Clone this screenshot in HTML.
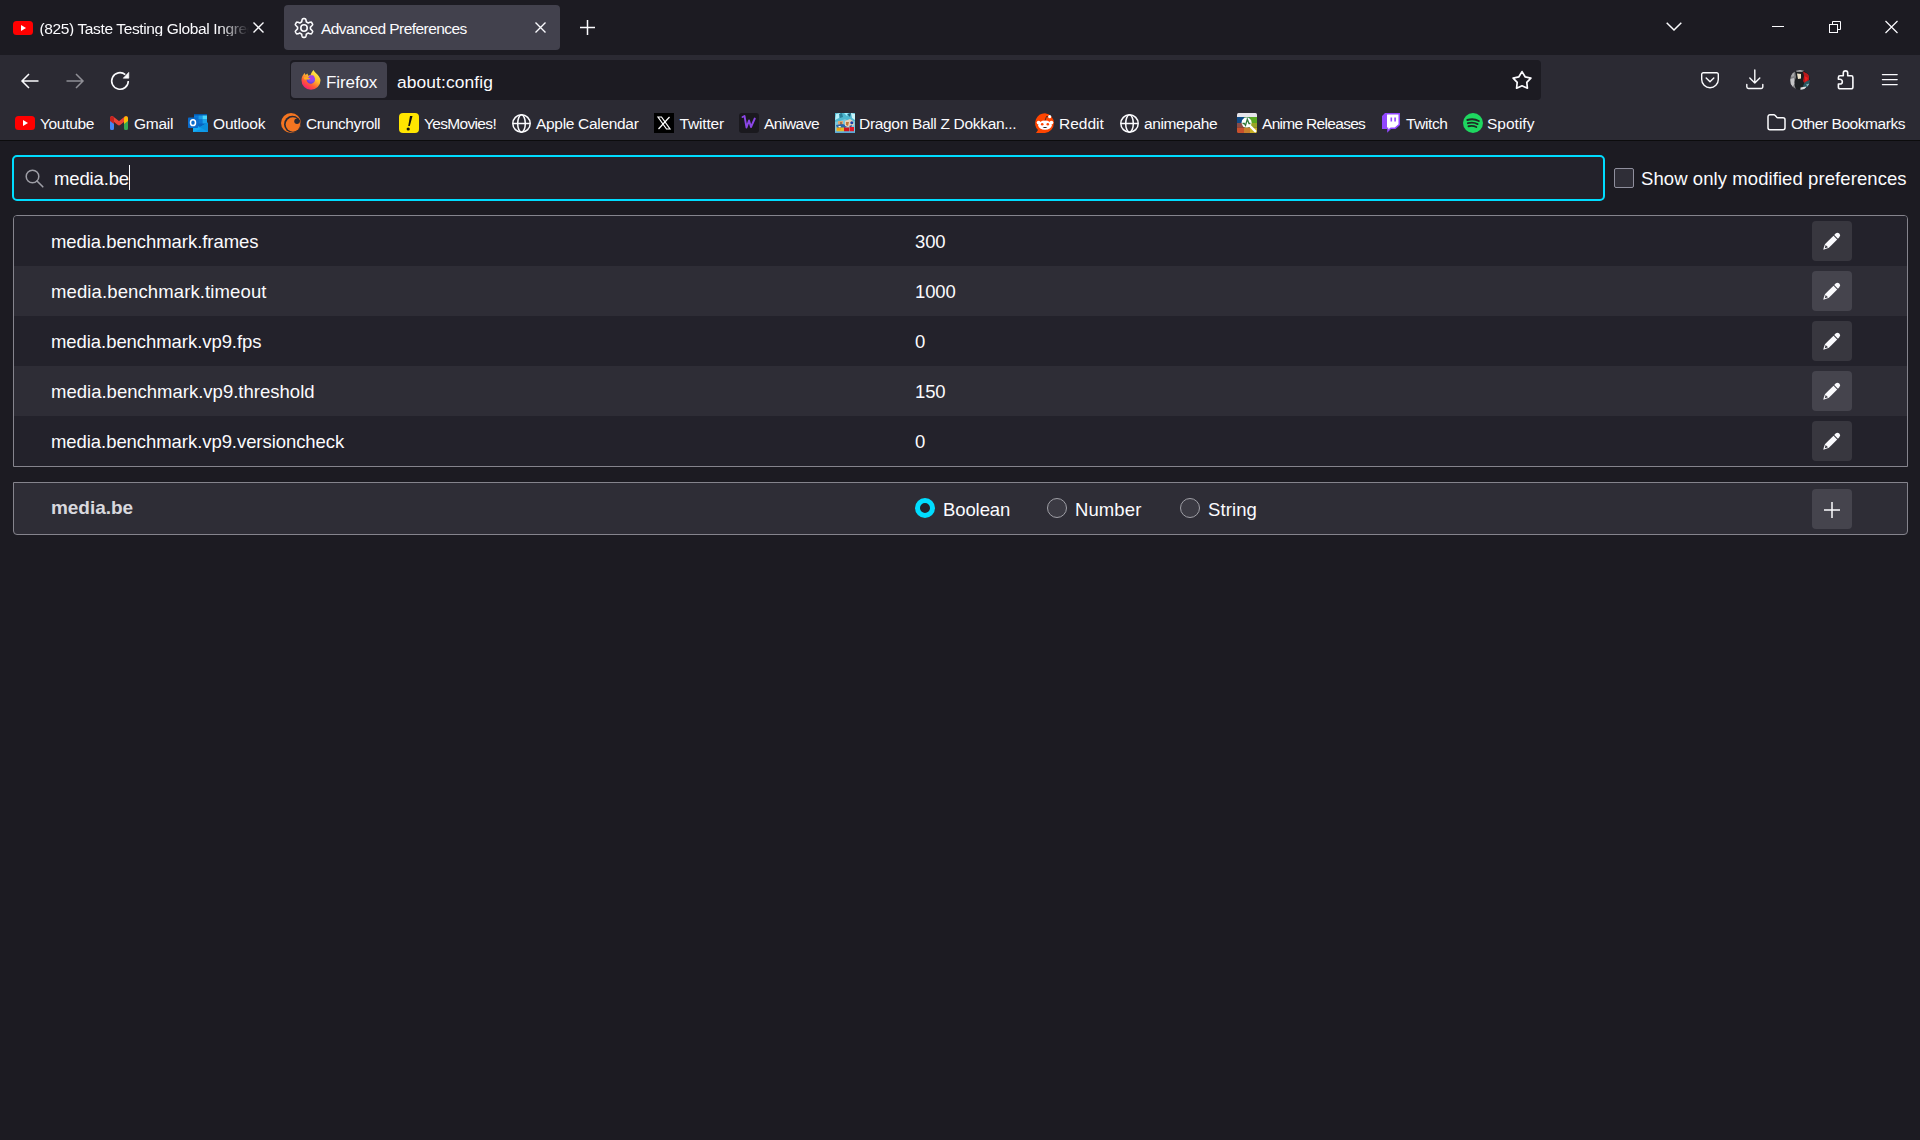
<!DOCTYPE html>
<html><head><meta charset="utf-8">
<style>
*{box-sizing:border-box;margin:0;padding:0}
html,body{width:1920px;height:1140px;overflow:hidden;background:#1c1b22;font-family:"Liberation Sans",sans-serif;color:#fbfbfe}
.abs{position:absolute}
svg{position:absolute;overflow:visible}
#tabbar{position:absolute;left:0;top:0;width:1920px;height:55px;background:#1c1b22}
#toolbar{position:absolute;left:0;top:55px;width:1920px;height:85px;background:#2b2a33}
#sep{position:absolute;left:0;top:140px;width:1920px;height:1px;background:#0c0c0d}
.t{position:absolute;white-space:nowrap;line-height:1}
.bm{font-size:15.5px;top:115.5px}
.row{position:absolute;left:14px;width:1893px;height:50px}
.name{position:absolute;left:37px;top:17px;font-size:18.5px;white-space:nowrap;line-height:1;letter-spacing:-0.06px}
.val{position:absolute;left:901px;top:17px;font-size:18.5px;white-space:nowrap;line-height:1;letter-spacing:-0.15px}
.btn{position:absolute;left:1798px;top:5px;width:40px;height:40px;border-radius:4px}
</style></head><body>

<div id="tabbar">
  <!-- tab 1 -->
  <svg style="left:13px;top:21px" width="20" height="14" viewBox="0 0 20 14"><rect x="0" y="0" width="20" height="14" rx="3.5" fill="#ff0000"/><path d="M8 4 L13 7 L8 10 Z" fill="#fff"/></svg>
  <div class="t" style="left:39.5px;top:20.5px;font-size:15.5px;width:209px;letter-spacing:-0.37px;overflow:hidden;-webkit-mask-image:linear-gradient(90deg,#000 86%,transparent 100%)">(825) Taste Testing Global Ingredients</div>
  <svg style="left:253px;top:22px" width="11" height="11" viewBox="0 0 11 11"><path d="M0.5 0.5 L10.5 10.5 M10.5 0.5 L0.5 10.5" stroke="#fbfbfe" stroke-width="1.4"/></svg>
  <!-- tab 2 -->
  <div class="abs" style="left:284px;top:5px;width:276px;height:45px;background:#42414d;border-radius:4px"></div>
  <svg style="left:292px;top:16px" width="24" height="24" viewBox="0 0 24 24"><g fill="none" stroke="#fbfbfe" stroke-width="1.6" stroke-linejoin="round"><path d="M18.45 12.00 L18.45 12.23 L18.43 12.45 L18.41 12.67 L18.39 12.90 L18.57 13.16 L18.98 13.48 L19.42 13.85 L19.84 14.25 L20.24 14.68 L20.58 15.12 L20.67 15.50 L20.54 15.80 L20.40 16.10 L20.26 16.39 L20.10 16.67 L19.93 16.95 L19.75 17.23 L19.56 17.50 L19.37 17.76 L19.00 17.87 L18.44 17.80 L17.87 17.67 L17.31 17.50 L16.78 17.30 L16.29 17.11 L15.97 17.08 L15.79 17.22 L15.61 17.35 L15.42 17.47 L15.23 17.59 L15.03 17.70 L14.83 17.80 L14.62 17.89 L14.42 17.98 L14.28 18.27 L14.21 18.79 L14.11 19.35 L13.97 19.92 L13.80 20.47 L13.59 20.99 L13.30 21.26 L12.98 21.30 L12.65 21.33 L12.33 21.34 L12.00 21.35 L11.67 21.34 L11.35 21.33 L11.02 21.30 L10.70 21.26 L10.41 20.99 L10.20 20.47 L10.03 19.92 L9.89 19.35 L9.79 18.79 L9.72 18.27 L9.58 17.98 L9.38 17.89 L9.17 17.80 L8.97 17.70 L8.78 17.59 L8.58 17.47 L8.39 17.35 L8.21 17.22 L8.03 17.08 L7.71 17.11 L7.22 17.30 L6.69 17.50 L6.13 17.67 L5.56 17.80 L5.00 17.87 L4.63 17.76 L4.44 17.50 L4.25 17.23 L4.07 16.95 L3.90 16.67 L3.74 16.39 L3.60 16.10 L3.46 15.80 L3.33 15.50 L3.42 15.12 L3.76 14.68 L4.16 14.25 L4.58 13.85 L5.02 13.48 L5.43 13.16 L5.61 12.90 L5.59 12.67 L5.57 12.45 L5.55 12.23 L5.55 12.00 L5.55 11.77 L5.57 11.55 L5.59 11.33 L5.61 11.10 L5.43 10.84 L5.02 10.52 L4.58 10.15 L4.16 9.75 L3.76 9.32 L3.42 8.88 L3.33 8.50 L3.46 8.20 L3.60 7.90 L3.74 7.61 L3.90 7.32 L4.07 7.05 L4.25 6.77 L4.44 6.50 L4.63 6.24 L5.00 6.13 L5.56 6.20 L6.13 6.33 L6.69 6.50 L7.22 6.70 L7.71 6.89 L8.03 6.92 L8.21 6.78 L8.39 6.65 L8.58 6.53 L8.77 6.41 L8.97 6.30 L9.17 6.20 L9.38 6.11 L9.58 6.02 L9.72 5.73 L9.79 5.21 L9.89 4.65 L10.03 4.08 L10.20 3.53 L10.41 3.01 L10.70 2.74 L11.02 2.70 L11.35 2.67 L11.67 2.66 L12.00 2.65 L12.33 2.66 L12.65 2.67 L12.98 2.70 L13.30 2.74 L13.59 3.01 L13.80 3.53 L13.97 4.08 L14.11 4.65 L14.21 5.21 L14.28 5.73 L14.42 6.02 L14.62 6.11 L14.83 6.20 L15.03 6.30 L15.23 6.41 L15.42 6.53 L15.61 6.65 L15.79 6.78 L15.97 6.92 L16.29 6.89 L16.78 6.70 L17.31 6.50 L17.87 6.33 L18.44 6.20 L19.00 6.13 L19.37 6.24 L19.56 6.50 L19.75 6.77 L19.93 7.05 L20.10 7.32 L20.26 7.61 L20.40 7.90 L20.54 8.20 L20.67 8.50 L20.58 8.88 L20.24 9.32 L19.84 9.75 L19.42 10.15 L18.98 10.52 L18.57 10.84 L18.39 11.10 L18.41 11.33 L18.43 11.55 L18.45 11.77 Z"/><circle cx="12" cy="12" r="3.2"/></g></svg>
  <div class="t" style="left:321px;top:20.5px;font-size:15.5px;letter-spacing:-0.55px">Advanced Preferences</div>
  <svg style="left:535px;top:22px" width="11" height="11" viewBox="0 0 11 11"><path d="M0.5 0.5 L10.5 10.5 M10.5 0.5 L0.5 10.5" stroke="#fbfbfe" stroke-width="1.4"/></svg>
  <!-- new tab -->
  <svg style="left:580px;top:20px" width="15" height="15" viewBox="0 0 15 15"><path d="M7.5 0 V15 M0 7.5 H15" stroke="#fbfbfe" stroke-width="1.5"/></svg>
  <!-- right -->
  <svg style="left:1666px;top:22px" width="16" height="9" viewBox="0 0 16 9"><path d="M0.7 0.7 L8 8 L15.3 0.7" fill="none" stroke="#fbfbfe" stroke-width="1.5"/></svg>
  <div class="abs" style="left:1772px;top:26px;width:12px;height:1px;background:#fbfbfe"></div>
  <svg style="left:1829px;top:21px" width="12" height="12" viewBox="0 0 12 12"><g fill="none" stroke="#fbfbfe" stroke-width="1"><rect x="0.5" y="3.5" width="8" height="8"/><path d="M3.5 3.5 V0.5 H11.5 V8.5 H8.5"/></g></svg>
  <svg style="left:1885px;top:21px" width="13" height="12" viewBox="0 0 13 12"><path d="M0.5 0 L12.5 12 M12.5 0 L0.5 12" stroke="#fbfbfe" stroke-width="1.2"/></svg>
</div>

<div id="toolbar"></div>
<div id="sep"></div>
<!-- nav -->
<svg style="left:21px;top:73px" width="18" height="16" viewBox="0 0 18 16"><path d="M17.5 8 H1.5 M8 1 L1 8 L8 15" fill="none" stroke="#fbfbfe" stroke-width="1.5"/></svg>
<svg style="left:66px;top:73px" width="18" height="16" viewBox="0 0 18 16"><path d="M0.5 8 H16.5 M10 1 L17 8 L10 15" fill="none" stroke="#8f8f96" stroke-width="1.5"/></svg>
<svg style="left:111px;top:71px" width="19" height="19" viewBox="0 0 19 19"><path d="M17.3 10 A8.3 8.3 0 1 1 14.3 3.6" fill="none" stroke="#fbfbfe" stroke-width="1.6"/><path d="M12.2 7.2 L17.8 7.2 L17.8 1.3 Z" fill="#fbfbfe" stroke="#fbfbfe" stroke-width="0.6" stroke-linejoin="round"/></svg>
<!-- urlbar -->
<div class="abs" style="left:290px;top:60px;width:1251px;height:40px;background:#1c1b22;border-radius:4px"></div>
<div class="abs" style="left:291px;top:62px;width:96px;height:36px;background:#42414d;border-radius:4px"></div>
<svg style="left:301px;top:70px" width="20" height="20" viewBox="0 0 20 20">
  <defs><linearGradient id="ffg" x1="0.85" y1="0.05" x2="0.25" y2="1"><stop offset="0" stop-color="#fff44f"/><stop offset="0.4" stop-color="#ffbd2e"/><stop offset="0.7" stop-color="#ff5a36"/><stop offset="1" stop-color="#f5157a"/></linearGradient>
  <radialGradient id="ffp" cx="0.6" cy="0.3" r="0.8"><stop offset="0" stop-color="#b833e1"/><stop offset="0.5" stop-color="#8b4cf0"/><stop offset="1" stop-color="#4a3bd0"/></radialGradient></defs>
  <path d="M10 19.7 A9.5 9.3 0 0 1 0.5 10.2 C0.5 7.5 1.5 5.5 2.5 4.5 L3.5 3 L4.6 5 L6.4 3.5 L7.3 5.8 C8.2 5.4 9 5.3 9.5 5.3 C10 3 11.5 1 12.5 0 C13.5 2.5 16.5 4 18 6.5 C19.3 8.5 19.6 10 19.5 10.5 A9.5 9.3 0 0 1 10 19.7 Z" fill="url(#ffg)"/>
  <path d="M5.5 9.7 A4.3 4.3 0 1 0 13.5 7.2 L12.8 5.8 C11.5 5.3 10 5.2 8.6 5.6 Z" fill="url(#ffp)"/>
  <path d="M2.5 7.5 C4.5 7 6.5 7.3 9.5 8.7 C7.5 9.8 5.5 9.6 3.5 9.4 Z" fill="#ffb01f"/>
</svg>
<div class="t" style="left:326px;top:74px;font-size:17px;letter-spacing:-0.1px">Firefox</div>
<div class="t" style="left:397px;top:74px;font-size:17.4px;letter-spacing:0.1px">about:config</div>
<svg style="left:1512px;top:70px" width="20" height="20" viewBox="0 0 20 20"><path d="M10 1.6 L13.1 6.8 L18.9 8.1 L14.8 12.4 L15.4 18.2 L10 15.8 L4.6 18.2 L5.2 12.4 L1.1 8.1 L6.9 6.8 Z" fill="none" stroke="#fbfbfe" stroke-width="1.7" stroke-linejoin="round"/></svg>
<!-- right toolbar icons -->
<svg style="left:1701px;top:72px" width="18" height="17" viewBox="0 0 18 17"><path d="M2.3 0.7 H15.7 A1.6 1.6 0 0 1 17.3 2.3 V7.5 A8.3 8.3 0 0 1 0.7 7.5 V2.3 A1.6 1.6 0 0 1 2.3 0.7 Z" fill="none" stroke="#fbfbfe" stroke-width="1.4"/><path d="M5.2 6 L9 9.8 L12.8 6" fill="none" stroke="#fbfbfe" stroke-width="1.4" stroke-linecap="round" stroke-linejoin="round"/></svg>
<svg style="left:1746px;top:69px" width="18" height="21" viewBox="0 0 18 21"><path d="M8.8 1 V14 M3.8 9 L8.8 14 L13.8 9" fill="none" stroke="#fbfbfe" stroke-width="1.4" stroke-linecap="round" stroke-linejoin="round"/><path d="M0.8 15.5 V17.8 A1.7 1.7 0 0 0 2.5 19.5 H15.1 A1.7 1.7 0 0 0 16.8 17.8 V15.5" fill="none" stroke="#fbfbfe" stroke-width="1.4" stroke-linecap="round"/></svg>
<svg style="left:1790px;top:70px" width="20" height="20" viewBox="0 0 20 20"><defs><clipPath id="avc"><circle cx="10" cy="10" r="10"/></clipPath></defs><g clip-path="url(#avc)"><rect width="20" height="20" fill="#1c1f22"/>
<path d="M0 2 L5 1 L6 7 L4 13 L6 20 L0 20 Z" fill="#808184"/><path d="M0.5 9 L4 8 L4.5 14 L2.5 17 L0.5 14 Z" fill="#c4c4c6"/><path d="M1 3 L4 2.5 L4 6 L1.5 7 Z" fill="#a8a8aa"/>
<path d="M4 0 H16 L12 1.8 L7 1.8 Z" fill="#b4b4b6"/>
<path d="M13 1.5 L19 4.5 L19 10 L15.5 15 L13 11 L14 6 Z" fill="#b81a1c"/><path d="M14.5 6 L18 8 L15.5 13 Z" fill="#f01c1c"/>
<path d="M7 3.5 L11 4 L11 8.5 L8 9 Z" fill="#ece2c8"/>
<path d="M15 12 L20 10 L20 20 L12 20 L13 16 Z" fill="#2a5862"/><path d="M16 14.5 L19.5 13.5 L18.5 18 Z" fill="#8ab4bc"/>
<path d="M10.5 17.5 L16.5 16.5 L14.5 20 L10.5 20 Z" fill="#e0e0e2"/>
</g></svg>
<svg style="left:1832px;top:66px" width="28" height="28" viewBox="0 0 28 28"><path d="M8 9.8 H11.3 V7.1 A2.2 2.2 0 0 1 15.7 7.1 V9.8 H19.3 A1.6 1.6 0 0 1 20.9 11.4 V21.2 A1.6 1.6 0 0 1 19.3 22.8 H8 A1.6 1.6 0 0 1 6.4 21.2 V18 H8 A2.35 2.35 0 0 0 8 13.3 H6.4 V11.4 A1.6 1.6 0 0 1 8 9.8 Z" fill="none" stroke="#fbfbfe" stroke-width="1.6" stroke-linejoin="round"/></svg>
<svg style="left:1882px;top:73px" width="16" height="13" viewBox="0 0 16 13"><path d="M0.4 1.5 H15.2 M0.4 6.5 H15.2 M0.4 11.5 H15.2" stroke="#fbfbfe" stroke-width="1.25" stroke-linecap="round"/></svg>

<!-- bookmarks -->
<svg style="left:15px;top:116px" width="20" height="14" viewBox="0 0 20 14"><rect width="20" height="14" rx="3.5" fill="#ff0000"/><path d="M8 4 L13 7 L8 10 Z" fill="#fff"/></svg>
<div class="t bm" style="left:40.00px;letter-spacing:-0.333px">Youtube</div>
<svg style="left:110px;top:116px" width="18" height="14" viewBox="0 0 18 14"><path d="M0 3 H4 V12.5 A1.5 1.5 0 0 1 2.5 14 H1.5 A1.5 1.5 0 0 1 0 12.5 Z" fill="#4285f4"/><path d="M14 3 H18 V12.5 A1.5 1.5 0 0 1 16.5 14 H15.5 A1.5 1.5 0 0 1 14 12.5 Z" fill="#34a853"/><path d="M2 2 L9 7.5 L16 2" fill="none" stroke="#ea4335" stroke-width="3.8" stroke-linecap="round" stroke-linejoin="round"/><path d="M14 2.3 A2 2 0 0 1 18 2.3 V5 L14 8 Z" fill="#fbbc04"/><path d="M0 2.3 A2 2 0 0 1 4 2.3 V8 L0 5 Z" fill="#c5221f"/></svg>
<div class="t bm" style="left:134.00px;letter-spacing:-0.250px">Gmail</div>
<svg style="left:188px;top:114px" width="20" height="18" viewBox="0 0 20 18"><rect x="6" y="0" width="13" height="14" fill="#0865bf"/><rect x="6" y="0" width="13" height="1.5" fill="#0358a8"/><rect x="6" y="1.5" width="4.5" height="4" fill="#0a78d8"/><rect x="10.5" y="1.5" width="4" height="4" fill="#1a9ae6"/><rect x="14.5" y="1.5" width="4.5" height="4" fill="#46d6fc"/><rect x="6" y="5.5" width="4.5" height="4" fill="#0865bf"/><rect x="10.5" y="5.5" width="4" height="4" fill="#0a78d8"/><rect x="14.5" y="5.5" width="4.5" height="4" fill="#1aa4ee"/><path d="M5 9 L12 13 L20 8.5 V18 H5 Z" fill="#0f9ae8"/><path d="M5 18 L5 10 L13 15 Z" fill="#14aef5"/><path d="M20 8.5 V18 L12 13 Z" fill="#0a8fdc"/><rect x="0" y="3.5" width="10" height="10.5" rx="0.8" fill="#0a6ccc"/><ellipse cx="5" cy="8.7" rx="2.5" ry="2.9" fill="none" stroke="#fff" stroke-width="1.5"/></svg>
<div class="t bm" style="left:213.00px;letter-spacing:-0.167px">Outlook</div>
<svg style="left:280px;top:112px" width="22" height="22" viewBox="0 0 22 22"><circle cx="11" cy="11" r="10" fill="#f47521"/><circle cx="12.4" cy="12.2" r="8.4" fill="#2b2a33"/><circle cx="12.9" cy="12.5" r="7.2" fill="#f47521"/><circle cx="17" cy="9.2" r="2.7" fill="#2b2a33"/></svg>
<div class="t bm" style="left:306.00px;letter-spacing:-0.400px">Crunchyroll</div>
<svg style="left:399px;top:113px" width="20" height="20" viewBox="0 0 20 20"><rect width="20" height="20" rx="4" fill="#ffe500"/><path d="M11 3 L13.5 3 L10.8 13 L9.2 13 Z" fill="#111"/><circle cx="9.2" cy="16" r="1.6" fill="#111"/></svg>
<div class="t bm" style="left:424.00px;letter-spacing:-0.667px">YesMovies!</div>
<svg style="left:512px;top:114px" width="19" height="19" viewBox="0 0 19 19"><g fill="none" stroke="#fbfbfe" stroke-width="1.5"><circle cx="9.5" cy="9.5" r="8.7"/><ellipse cx="9.5" cy="9.5" rx="3.8" ry="8.7"/><path d="M0.8 9.5 H18.2"/></g></svg>
<div class="t bm" style="left:536.00px;letter-spacing:-0.308px">Apple Calendar</div>
<svg style="left:654px;top:113px" width="20" height="20" viewBox="0 0 20 20"><rect width="20" height="20" fill="#000"/><path d="M4 4 L7.5 4 L16 16 L12.5 16 Z" fill="none" stroke="#fff" stroke-width="1.2"/><path d="M15.5 4 L4.5 16" stroke="#fff" stroke-width="1.2"/></svg>
<div class="t bm" style="left:679.50px;letter-spacing:-0.167px">Twitter</div>
<svg style="left:739px;top:113px" width="20" height="20" viewBox="0 0 20 20"><rect width="20" height="20" rx="3" fill="#1a191e"/><path d="M3.5 4 L5.5 3 L7.5 14.5 L10 7.5 L12 14 L15.8 5.5" fill="none" stroke="#8b46e6" stroke-width="1.9" stroke-linejoin="round" stroke-linecap="round"/></svg>
<div class="t bm" style="left:764.00px;letter-spacing:-0.500px">Aniwave</div>
<svg style="left:835px;top:113px" width="20" height="20" viewBox="0 0 20 20"><rect width="20" height="20" fill="#7cc8dc"/>
<path d="M0 0 H20 V8 L15 9 L10 6 L5 8 L0 9 Z" fill="#4fb8d0"/>
<path d="M1 1 L5 0 L4 5 L0 7 Z" fill="#b8f0fa"/><path d="M9 0 L14 0 L12 3 Z" fill="#9ef0ff"/><path d="M16 0 L20 1 L20 7 L17 5 Z" fill="#c8f4fa"/>
<path d="M4 1 L7 0 L8 4 L5 5 Z" fill="#2a7f98"/><path d="M12 1 L16 0 L15 4 Z" fill="#1f5f78"/>
<path d="M3 8 L8 8 L8 12 L5 13 L3 11 Z" fill="#d8a878"/><path d="M5.5 9 L6.5 9 L6.5 12 L5.5 12 Z" fill="#6a3a20"/>
<path d="M1 12 L8 11 L12 13 L10 15 L2 15 Z" fill="#2a64a8"/><path d="M3 13 L6 13 L5 15 Z" fill="#e8f4f8"/>
<path d="M10 8 L15 6 L18 8 L19 12 L14 14 L10 13 Z" fill="#e8d2b8"/><path d="M11 9 L14 9 L13 13 L11 12 Z" fill="#c07838"/>
<circle cx="16.8" cy="9.8" r="1.5" fill="#1a3ca8"/><path d="M14 13 L17 12 L16 15 Z" fill="#2a50a0"/>
<rect x="1.5" y="14.5" width="7.5" height="4" fill="#e2b828"/><rect x="2" y="15" width="4" height="2" fill="#f0a010"/>
<rect x="9" y="14.5" width="5" height="4" fill="#d01420"/><rect x="14.5" y="14" width="4.5" height="4.5" fill="#e01828"/>
<rect x="0" y="18.5" width="20" height="1.5" fill="#5aa8d8"/></svg>
<div class="t bm" style="left:859.00px;letter-spacing:-0.318px">Dragon Ball Z Dokkan...</div>
<svg style="left:1035px;top:113px" width="20" height="20" viewBox="0 0 20 20"><path d="M10 0.2 A9.9 9.9 0 0 1 10 19.9 H1 L3 17 A9.9 9.9 0 0 1 10 0.2 Z" fill="#ff4500"/><ellipse cx="10" cy="12.2" rx="6.8" ry="4.6" fill="#fff"/><circle cx="3.6" cy="9.6" r="1.9" fill="#fff"/><circle cx="16.4" cy="9.6" r="1.9" fill="#fff"/><path d="M10 7.5 L11.5 3.5 L14.5 4" fill="none" stroke="#1c1b22" stroke-width="0.7"/><circle cx="14.7" cy="3.7" r="1.6" fill="#fff"/><circle cx="7.2" cy="11.3" r="1.3" fill="#ff4500"/><circle cx="12.8" cy="11.3" r="1.3" fill="#ff4500"/><path d="M7.6 13.9 Q10 16 12.4 13.9 Z" fill="#111"/></svg>
<div class="t bm" style="left:1059.00px;letter-spacing:0.000px">Reddit</div>
<svg style="left:1120px;top:114px" width="19" height="19" viewBox="0 0 19 19"><g fill="none" stroke="#fbfbfe" stroke-width="1.5"><circle cx="9.5" cy="9.5" r="8.7"/><ellipse cx="9.5" cy="9.5" rx="3.8" ry="8.7"/><path d="M0.8 9.5 H18.2"/></g></svg>
<div class="t bm" style="left:1144.00px;letter-spacing:-0.375px">animepahe</div>
<svg style="left:1237px;top:113px" width="20" height="20" viewBox="0 0 20 20"><defs><clipPath id="arc"><rect width="20" height="20" rx="1.5"/></clipPath></defs><g clip-path="url(#arc)"><rect width="20" height="4" fill="#e6e4ea"/><rect y="4" width="7" height="6" fill="#0f4a86"/><rect x="7" y="4" width="6" height="6" fill="#3f8a4a"/><rect x="13" y="4" width="7" height="6" fill="#5aa822"/><rect y="10" width="7" height="4.5" fill="#8a4c48"/><rect x="13" y="10" width="7" height="4.5" fill="#98a424"/><rect y="14.5" width="7" height="5.5" fill="#c8502c"/><rect x="7" y="14.5" width="6" height="5.5" fill="#c8802c"/><rect x="13" y="14.5" width="7" height="5.5" fill="#c8b024"/><rect x="7" y="10" width="6" height="4.5" fill="#7a8a30"/></g><circle cx="9.6" cy="9.6" r="5" fill="#fff"/><path d="M5.5 10.5 L7.3 10.5 L8.5 12.5 L10.3 6.2 L12 10.5 L13.5 10.5" fill="none" stroke="#2f7a3a" stroke-width="1.3"/><path d="M13.2 13.2 L18.2 18.2" stroke="#fff" stroke-width="2.4" stroke-linecap="round"/></svg>
<div class="t bm" style="left:1262.00px;letter-spacing:-0.692px">Anime Releases</div>
<svg style="left:1382px;top:113px" width="18" height="20" viewBox="0 0 18 20"><path d="M3 0 H18 V12 L13.5 16 H9 L5.2 19.8 V16 H0 V3 Z" fill="#9146ff"/><path d="M5 1.5 H16.5 V11.2 L12.8 14.4 H8.6 L6.3 16.6 V14.4 H5 Z" fill="#fff"/><path d="M9.3 4.5 V8.5 M13.1 4.5 V8.5" stroke="#9146ff" stroke-width="1.6"/></svg>
<div class="t bm" style="left:1406.00px;letter-spacing:-0.400px">Twitch</div>
<svg style="left:1463px;top:113px" width="20" height="20" viewBox="0 0 20 20"><circle cx="10" cy="10" r="10" fill="#1ed760"/><path d="M4.3 7 C8 5.8 12.5 6.1 15.8 8 M4.9 10.2 C8.2 9.3 11.8 9.6 14.6 11.1 M5.5 13.2 C8.2 12.6 11 12.8 13.3 14" fill="none" stroke="#1f2a24" stroke-width="1.9" stroke-linecap="round"/></svg>
<div class="t bm" style="left:1487.00px;letter-spacing:0.000px">Spotify</div>
<svg style="left:1766px;top:112px" width="22" height="20" viewBox="0 0 22 20"><path d="M4 2.7 H7.8 Q8.5 2.7 9 3.3 L10.6 5.1 Q11 5.7 11.7 5.7 H17 A2 2 0 0 1 19 7.7 V15.8 A2 2 0 0 1 17 17.8 H4 A2 2 0 0 1 2 15.8 V4.7 A2 2 0 0 1 4 2.7 Z" fill="none" stroke="#fbfbfe" stroke-width="1.5" stroke-linejoin="round"/></svg>
<div class="t bm" style="left:1791.00px;letter-spacing:-0.429px">Other Bookmarks</div>


<!-- content -->
<div class="abs" style="left:12px;top:155px;width:1593px;height:46px;border:2px solid #00ddff;border-radius:5px;background:#23222b"></div>
<svg style="left:25px;top:169px" width="19" height="19" viewBox="0 0 19 19"><circle cx="7.5" cy="7.5" r="6.3" fill="none" stroke="#9e9ea6" stroke-width="1.5"/><path d="M12 12 L17.8 17.8" stroke="#9e9ea6" stroke-width="1.6" stroke-linecap="round"/></svg>
<div class="t" style="left:54px;top:170px;font-size:18.5px;letter-spacing:-0.15px">media.be</div>
<div class="abs" style="left:129px;top:165px;width:1px;height:25px;background:#fbfbfe"></div>
<div class="abs" style="left:1614px;top:168px;width:20px;height:20px;border:1px solid #8f8f9d;border-radius:2px;background:#2f2e37"></div>
<div class="t" style="left:1641px;top:170px;font-size:18.5px;letter-spacing:0.08px">Show only modified preferences</div>

<div class="abs" style="left:13px;top:215px;width:1895px;height:252px;border:1px solid #85848d;border-radius:4px 4px 0 0;background:#23222b;overflow:hidden">
  <div class="row" style="left:0;top:0;background:#23222b"><div class="name">media.benchmark.frames</div><div class="val">300</div><div class="btn" style="background:#38373f"></div></div>
  <div class="row" style="left:0;top:50px;background:#2e2d36"><div class="name" style="letter-spacing:0.12px">media.benchmark.timeout</div><div class="val">1000</div><div class="btn" style="background:#45444d"></div></div>
  <div class="row" style="left:0;top:100px;background:#23222b"><div class="name">media.benchmark.vp9.fps</div><div class="val">0</div><div class="btn" style="background:#38373f"></div></div>
  <div class="row" style="left:0;top:150px;background:#2e2d36"><div class="name" style="letter-spacing:0.01px">media.benchmark.vp9.threshold</div><div class="val">150</div><div class="btn" style="background:#45444d"></div></div>
  <div class="row" style="left:0;top:200px;background:#23222b"><div class="name">media.benchmark.vp9.versioncheck</div><div class="val">0</div><div class="btn" style="background:#38373f"></div></div>
</div>
<svg style="left:1823px;top:232px" width="18" height="18" viewBox="0 0 18 18"><path d="M2.1 12 L10.5 3.7 L14.2 7.4 L5.9 15.8 Q3.5 17 0.3 17.7 Q1 14.4 2.1 12 Z" fill="#fbfbfe"/><path d="M11.2 3 L14.9 6.7 L16.3 5.3 A2.6 2.6 0 0 0 12.6 1.6 Z" fill="#fbfbfe"/><path d="M2.6 12.9 L5 15.3 L1.8 16.2 Z" fill="#38373f"/></svg>
<svg style="left:1823px;top:282px" width="18" height="18" viewBox="0 0 18 18"><path d="M2.1 12 L10.5 3.7 L14.2 7.4 L5.9 15.8 Q3.5 17 0.3 17.7 Q1 14.4 2.1 12 Z" fill="#fbfbfe"/><path d="M11.2 3 L14.9 6.7 L16.3 5.3 A2.6 2.6 0 0 0 12.6 1.6 Z" fill="#fbfbfe"/><path d="M2.6 12.9 L5 15.3 L1.8 16.2 Z" fill="#45444d"/></svg>
<svg style="left:1823px;top:332px" width="18" height="18" viewBox="0 0 18 18"><path d="M2.1 12 L10.5 3.7 L14.2 7.4 L5.9 15.8 Q3.5 17 0.3 17.7 Q1 14.4 2.1 12 Z" fill="#fbfbfe"/><path d="M11.2 3 L14.9 6.7 L16.3 5.3 A2.6 2.6 0 0 0 12.6 1.6 Z" fill="#fbfbfe"/><path d="M2.6 12.9 L5 15.3 L1.8 16.2 Z" fill="#38373f"/></svg>
<svg style="left:1823px;top:382px" width="18" height="18" viewBox="0 0 18 18"><path d="M2.1 12 L10.5 3.7 L14.2 7.4 L5.9 15.8 Q3.5 17 0.3 17.7 Q1 14.4 2.1 12 Z" fill="#fbfbfe"/><path d="M11.2 3 L14.9 6.7 L16.3 5.3 A2.6 2.6 0 0 0 12.6 1.6 Z" fill="#fbfbfe"/><path d="M2.6 12.9 L5 15.3 L1.8 16.2 Z" fill="#45444d"/></svg>
<svg style="left:1823px;top:432px" width="18" height="18" viewBox="0 0 18 18"><path d="M2.1 12 L10.5 3.7 L14.2 7.4 L5.9 15.8 Q3.5 17 0.3 17.7 Q1 14.4 2.1 12 Z" fill="#fbfbfe"/><path d="M11.2 3 L14.9 6.7 L16.3 5.3 A2.6 2.6 0 0 0 12.6 1.6 Z" fill="#fbfbfe"/><path d="M2.6 12.9 L5 15.3 L1.8 16.2 Z" fill="#38373f"/></svg>
<div class="abs" style="left:13px;top:482px;width:1895px;height:53px;border:1px solid #85848d;border-radius:0 0 4px 4px;background:#2e2d36"></div>
<div class="t" style="left:51px;top:498px;font-size:19px;font-weight:bold;color:#d8d8de;letter-spacing:-0.05px">media.be</div>
<div class="abs" style="left:915px;top:498px;width:20px;height:20px;border-radius:50%;border:5px solid #00ddff;background:#23222b"></div>
<div class="t" style="left:943px;top:501px;font-size:18.5px;letter-spacing:-0.1px">Boolean</div>
<div class="abs" style="left:1047px;top:498px;width:20px;height:20px;border-radius:50%;border:1px solid #9f9fa6;background:#3b3a43"></div>
<div class="t" style="left:1075px;top:501px;font-size:18.5px;letter-spacing:0.1px">Number</div>
<div class="abs" style="left:1180px;top:498px;width:20px;height:20px;border-radius:50%;border:1px solid #9f9fa6;background:#3b3a43"></div>
<div class="t" style="left:1208px;top:501px;font-size:18.5px;letter-spacing:0.1px">String</div>
<div class="abs" style="left:1812px;top:489px;width:40px;height:40px;border-radius:4px;background:#45444d"></div>
<svg style="left:1824px;top:502px" width="16" height="16" viewBox="0 0 16 16"><path d="M8 0 V16 M0 8 H16" stroke="#fbfbfe" stroke-width="1.5"/></svg>

</body></html>
